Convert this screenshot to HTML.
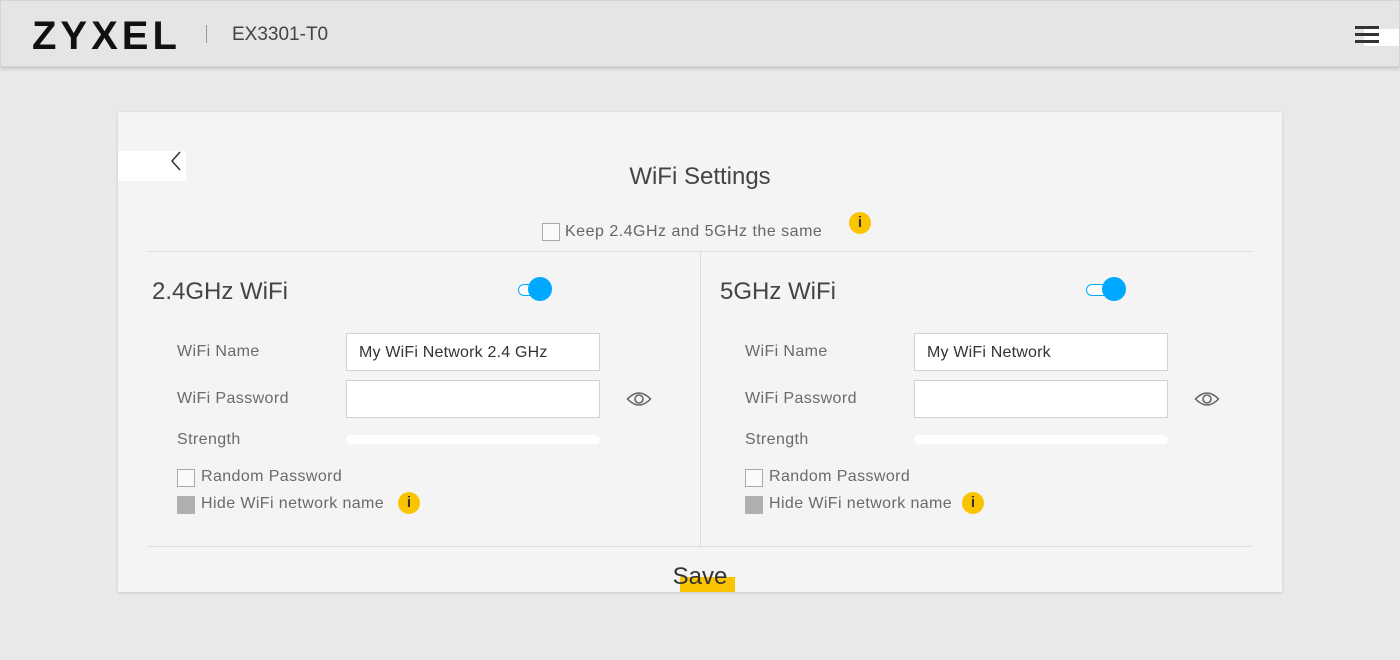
<!DOCTYPE html>
<html><head><style>
*{box-sizing:border-box;margin:0;padding:0}
body{width:1400px;height:660px;background:#e9e9e9;font-family:"Liberation Sans",sans-serif;position:relative;overflow:hidden;color:#555}
.a{position:absolute}
.hdr{left:0;top:0;width:1400px;height:67px;background:#e5e5e5;box-shadow:0 2px 3px rgba(0,0,0,.15);border:1px solid #d4d4d4}
.card{left:118px;top:112px;width:1164px;height:480px;background:#f4f4f4;box-shadow:0 1px 3px rgba(0,0,0,.15)}
.lbl{font-size:16px;color:#6a6a6a;letter-spacing:.4px}
.inp{width:254px;height:38px;background:#fff;border:1px solid #d2d2d2;font-size:16px;color:#333;padding:10px 12px;letter-spacing:.2px}
.cb{width:18px;height:18px;border:1px solid #aaa;background:#fafafa}
.info{width:22px;height:22px;border-radius:50%;background:#fbc400;color:#333;font-size:15px;text-align:center;line-height:22px;font-weight:bold}
</style></head><body>
<div class="a hdr"></div>
<div class="a" style="left:32px;top:14px;font-size:40px;font-weight:bold;letter-spacing:4px;color:#111">ZYXEL</div>
<div class="a" style="left:206px;top:25px;width:1px;height:18px;background:#999"></div>
<div class="a" style="left:232px;top:24px;font-size:19px;color:#444">EX3301-T0</div>
<div class="a" style="left:1364px;top:29px;width:35px;height:17px;background:#fff"></div>
<div class="a" style="left:1355px;top:26px;width:24px;height:3px;background:#333"></div>
<div class="a" style="left:1355px;top:33px;width:24px;height:3px;background:#333"></div>
<div class="a" style="left:1355px;top:40px;width:24px;height:3px;background:#333"></div>
<div class="a card"></div>
<div class="a" style="left:118px;top:151px;width:68px;height:30px;background:#fff"></div>
<svg class="a" style="left:168px;top:150px" width="16" height="22"><path d="M12 2 L4 11 L12 20" stroke="#333" stroke-width="1.5" fill="none"/></svg>
<div class="a" style="left:0;width:1400px;top:163px;text-align:center;font-size:24px;color:#444">WiFi Settings</div>
<div class="a cb" style="left:542px;top:223px"></div>
<div class="a" style="left:565px;top:223px;font-size:16px;color:#666;letter-spacing:.5px">Keep 2.4GHz and 5GHz the same</div>
<div class="a info" style="left:849px;top:212px">i</div>
<div class="a" style="left:147px;top:251px;width:1105px;height:1px;background:#ddd"></div>
<div class="a" style="left:700px;top:252px;width:1px;height:294px;background:#ddd"></div>
<div class="a" style="left:147px;top:546px;width:1105px;height:1px;background:#ddd"></div>

<div class="a" style="left:152px;top:278px;font-size:24px;color:#444">2.4GHz WiFi</div>
<div class="a" style="left:518px;top:284px;width:30px;height:12px;border:1.5px solid #00a9ff;border-radius:6px;background:#fff"></div>
<div class="a" style="left:528px;top:277px;width:24px;height:24px;border-radius:50%;background:#00a9ff"></div>
<div class="a lbl" style="left:177px;top:343px">WiFi Name</div>
<div class="a inp" style="left:346px;top:333px">My WiFi Network 2.4 GHz</div>
<div class="a lbl" style="left:177px;top:390px">WiFi Password</div>
<div class="a inp" style="left:346px;top:380px"></div>
<svg class="a" style="left:626px;top:390px" width="26" height="18"><path d="M1.5 9 Q13 -3 24.5 9 Q13 21 1.5 9Z" stroke="#666" stroke-width="1.6" fill="none"/><circle cx="13" cy="9" r="4" stroke="#666" stroke-width="1.6" fill="none"/></svg>
<div class="a lbl" style="left:177px;top:431px">Strength</div>
<div class="a" style="left:346px;top:435px;width:254px;height:9px;border-radius:5px;background:#fff"></div>
<div class="a cb" style="left:177px;top:469px"></div>
<div class="a lbl" style="left:201px;top:468px">Random Password</div>
<div class="a cb" style="left:177px;top:496px;background:#b0b0b0;border-color:#b0b0b0"></div>
<div class="a lbl" style="left:201px;top:495px">Hide WiFi network name</div>
<div class="a info" style="left:398px;top:492px">i</div>

<div class="a" style="left:720px;top:278px;font-size:24px;color:#444">5GHz WiFi</div>
<div class="a" style="left:1086px;top:284px;width:30px;height:12px;border:1.5px solid #00a9ff;border-radius:6px;background:#fff"></div>
<div class="a" style="left:1102px;top:277px;width:24px;height:24px;border-radius:50%;background:#00a9ff"></div>
<div class="a lbl" style="left:745px;top:343px">WiFi Name</div>
<div class="a inp" style="left:914px;top:333px">My WiFi Network</div>
<div class="a lbl" style="left:745px;top:390px">WiFi Password</div>
<div class="a inp" style="left:914px;top:380px"></div>
<svg class="a" style="left:1194px;top:390px" width="26" height="18"><path d="M1.5 9 Q13 -3 24.5 9 Q13 21 1.5 9Z" stroke="#666" stroke-width="1.6" fill="none"/><circle cx="13" cy="9" r="4" stroke="#666" stroke-width="1.6" fill="none"/></svg>
<div class="a lbl" style="left:745px;top:431px">Strength</div>
<div class="a" style="left:914px;top:435px;width:254px;height:9px;border-radius:5px;background:#fff"></div>
<div class="a cb" style="left:745px;top:469px"></div>
<div class="a lbl" style="left:769px;top:468px">Random Password</div>
<div class="a cb" style="left:745px;top:496px;background:#b0b0b0;border-color:#b0b0b0"></div>
<div class="a lbl" style="left:769px;top:495px">Hide WiFi network name</div>
<div class="a info" style="left:962px;top:492px">i</div>

<div class="a" style="left:680px;top:577px;width:55px;height:15px;background:#fbc400"></div>
<div class="a" style="left:0;width:1400px;top:563px;text-align:center;font-size:24px;color:#333">Save</div>
</body></html>
